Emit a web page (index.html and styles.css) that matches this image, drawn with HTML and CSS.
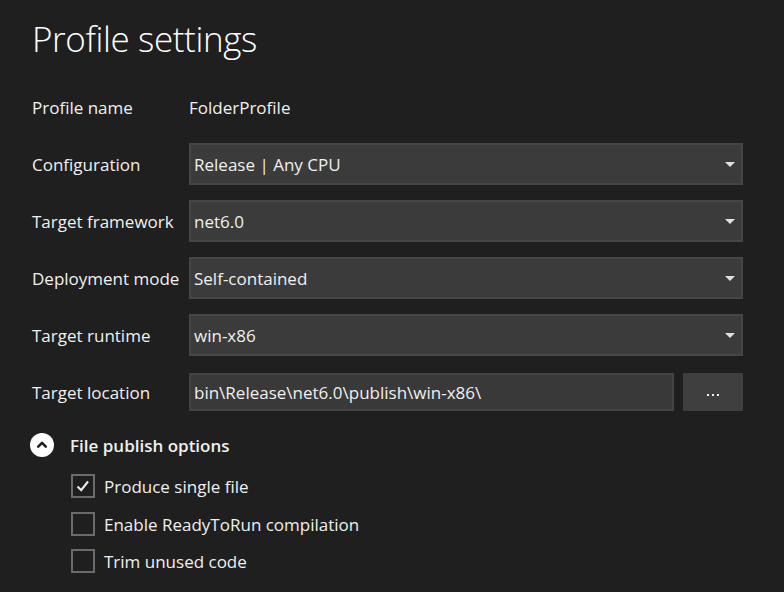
FILE: index.html
```html
<!DOCTYPE html>
<html>
<head>
<meta charset="utf-8">
<link rel="stylesheet" href="styles.css">
</head>
<body>
<div class="page">
  <h1 class="title">Profile settings</h1>
  <div class="form">
    <div class="row row-plain">
      <div class="label">Profile name</div>
      <div class="value">FolderProfile</div>
    </div>
    <div class="row">
      <div class="label">Configuration</div>
      <div class="select"><span>Release | Any CPU</span><svg class="arrow" width="10" height="6" viewBox="0 0 10 6"><path d="M0 0H10L5 5Z" fill="#e0e0e0"/></svg></div>
    </div>
    <div class="row">
      <div class="label">Target framework</div>
      <div class="select"><span>net6.0</span><svg class="arrow" width="10" height="6" viewBox="0 0 10 6"><path d="M0 0H10L5 5Z" fill="#e0e0e0"/></svg></div>
    </div>
    <div class="row">
      <div class="label">Deployment mode</div>
      <div class="select"><span>Self-contained</span><svg class="arrow" width="10" height="6" viewBox="0 0 10 6"><path d="M0 0H10L5 5Z" fill="#e0e0e0"/></svg></div>
    </div>
    <div class="row">
      <div class="label">Target runtime</div>
      <div class="select"><span>win-x86</span><svg class="arrow" width="10" height="6" viewBox="0 0 10 6"><path d="M0 0H10L5 5Z" fill="#e0e0e0"/></svg></div>
    </div>
    <div class="row">
      <div class="label">Target location</div>
      <div class="location">
        <div class="textbox">bin\Release\net6.0\publish\win-x86\</div>
        <div class="browse"><span class="dot"></span><span class="dot"></span><span class="dot"></span></div>
      </div>
    </div>
  </div>
  <div class="section">
    <div class="section-head">
      <span class="toggle"><svg width="24" height="24" viewBox="0 0 24 24"><circle cx="12" cy="12" r="12" fill="#ffffff"/><path d="M8.2 13.6L12 9.8L15.8 13.6" fill="none" stroke="#1f1f1f" stroke-width="2.6" stroke-linecap="round" stroke-linejoin="round"/></svg></span>
      <span class="section-title">File publish options</span>
    </div>
    <div class="checks">
      <label class="check"><span class="box"><svg width="20" height="20" viewBox="0 0 20 20"><path d="M4.5 10.5L8.2 14.2L15 5.5" fill="none" stroke="#e8e8e8" stroke-width="2.2"/></svg></span><span>Produce single file</span></label>
      <label class="check"><span class="box"></span><span>Enable ReadyToRun compilation</span></label>
      <label class="check"><span class="box"></span><span>Trim unused code</span></label>
    </div>
  </div>
</div>
</body>
</html>
```

FILE: styles.css
```css
html, body {
  margin: 0;
  padding: 0;
}
body {
  background: #1f1f1f;
  color: #f0f0f0;
  font-family: "Open Sans", "Noto Sans", sans-serif;
  font-size: 17px;
  width: 784px;
  height: 592px;
  overflow: hidden;
}
.page {
  padding: 0 0 0 32px;
}
.title {
  margin: 0;
  padding-top: 14px;
  font-size: 35px;
  font-weight: 300;
  line-height: 50px;
  color: #ffffff;
  letter-spacing: -0.4px;
}
.form {
  margin-top: 22px;
  display: flex;
  flex-direction: column;
  gap: 15px;
  width: 711px;
}
.row {
  display: flex;
  align-items: center;
  height: 42px;
}
.label {
  width: 157px;
  flex: none;
}
.select {
  flex: 1;
  height: 42px;
  box-sizing: border-box;
  border: 2px solid #464646;
  background: #3b3b3b;
  display: flex;
  align-items: center;
  justify-content: space-between;
  padding: 0 6px 0 3px;
}
.arrow {
  display: block;
  margin-top: 1px;
}
.location {
  flex: 1;
  display: flex;
  gap: 9px;
  height: 38px;
}
.textbox {
  flex: 1;
  box-sizing: border-box;
  border: 2px solid #444444;
  background: #393939;
  display: flex;
  align-items: center;
  padding: 0 3px;
}
.browse {
  width: 60px;
  background: #3f3f3f;
  display: flex;
  align-items: center;
  justify-content: center;
  gap: 3px;
  padding-top: 5px;
  box-sizing: border-box;
}
.dot {
  width: 2px;
  height: 2px;
  background: #f0f0f0;
}
.section {
  margin-top: 19px;
}
.section-head {
  display: flex;
  align-items: center;
  height: 26px;
  margin-left: -2px;
}
.toggle {
  width: 24px;
  height: 24px;
  display: block;
}
.toggle svg {
  display: block;
}
.section-title {
  margin-left: 16px;
  font-weight: 600;
}
.checks {
  margin-top: 16px;
  margin-left: 39px;
  display: flex;
  flex-direction: column;
  gap: 13px;
}
.check {
  display: flex;
  align-items: center;
  height: 24px;
}
.check:first-child {
  margin-bottom: 1px;
}
.box {
  width: 24px;
  height: 24px;
  box-sizing: border-box;
  border: 2px solid #6b6b6b;
  margin-right: 9px;
  display: flex;
  align-items: center;
  justify-content: center;
}
.box svg {
  display: block;
}
```
